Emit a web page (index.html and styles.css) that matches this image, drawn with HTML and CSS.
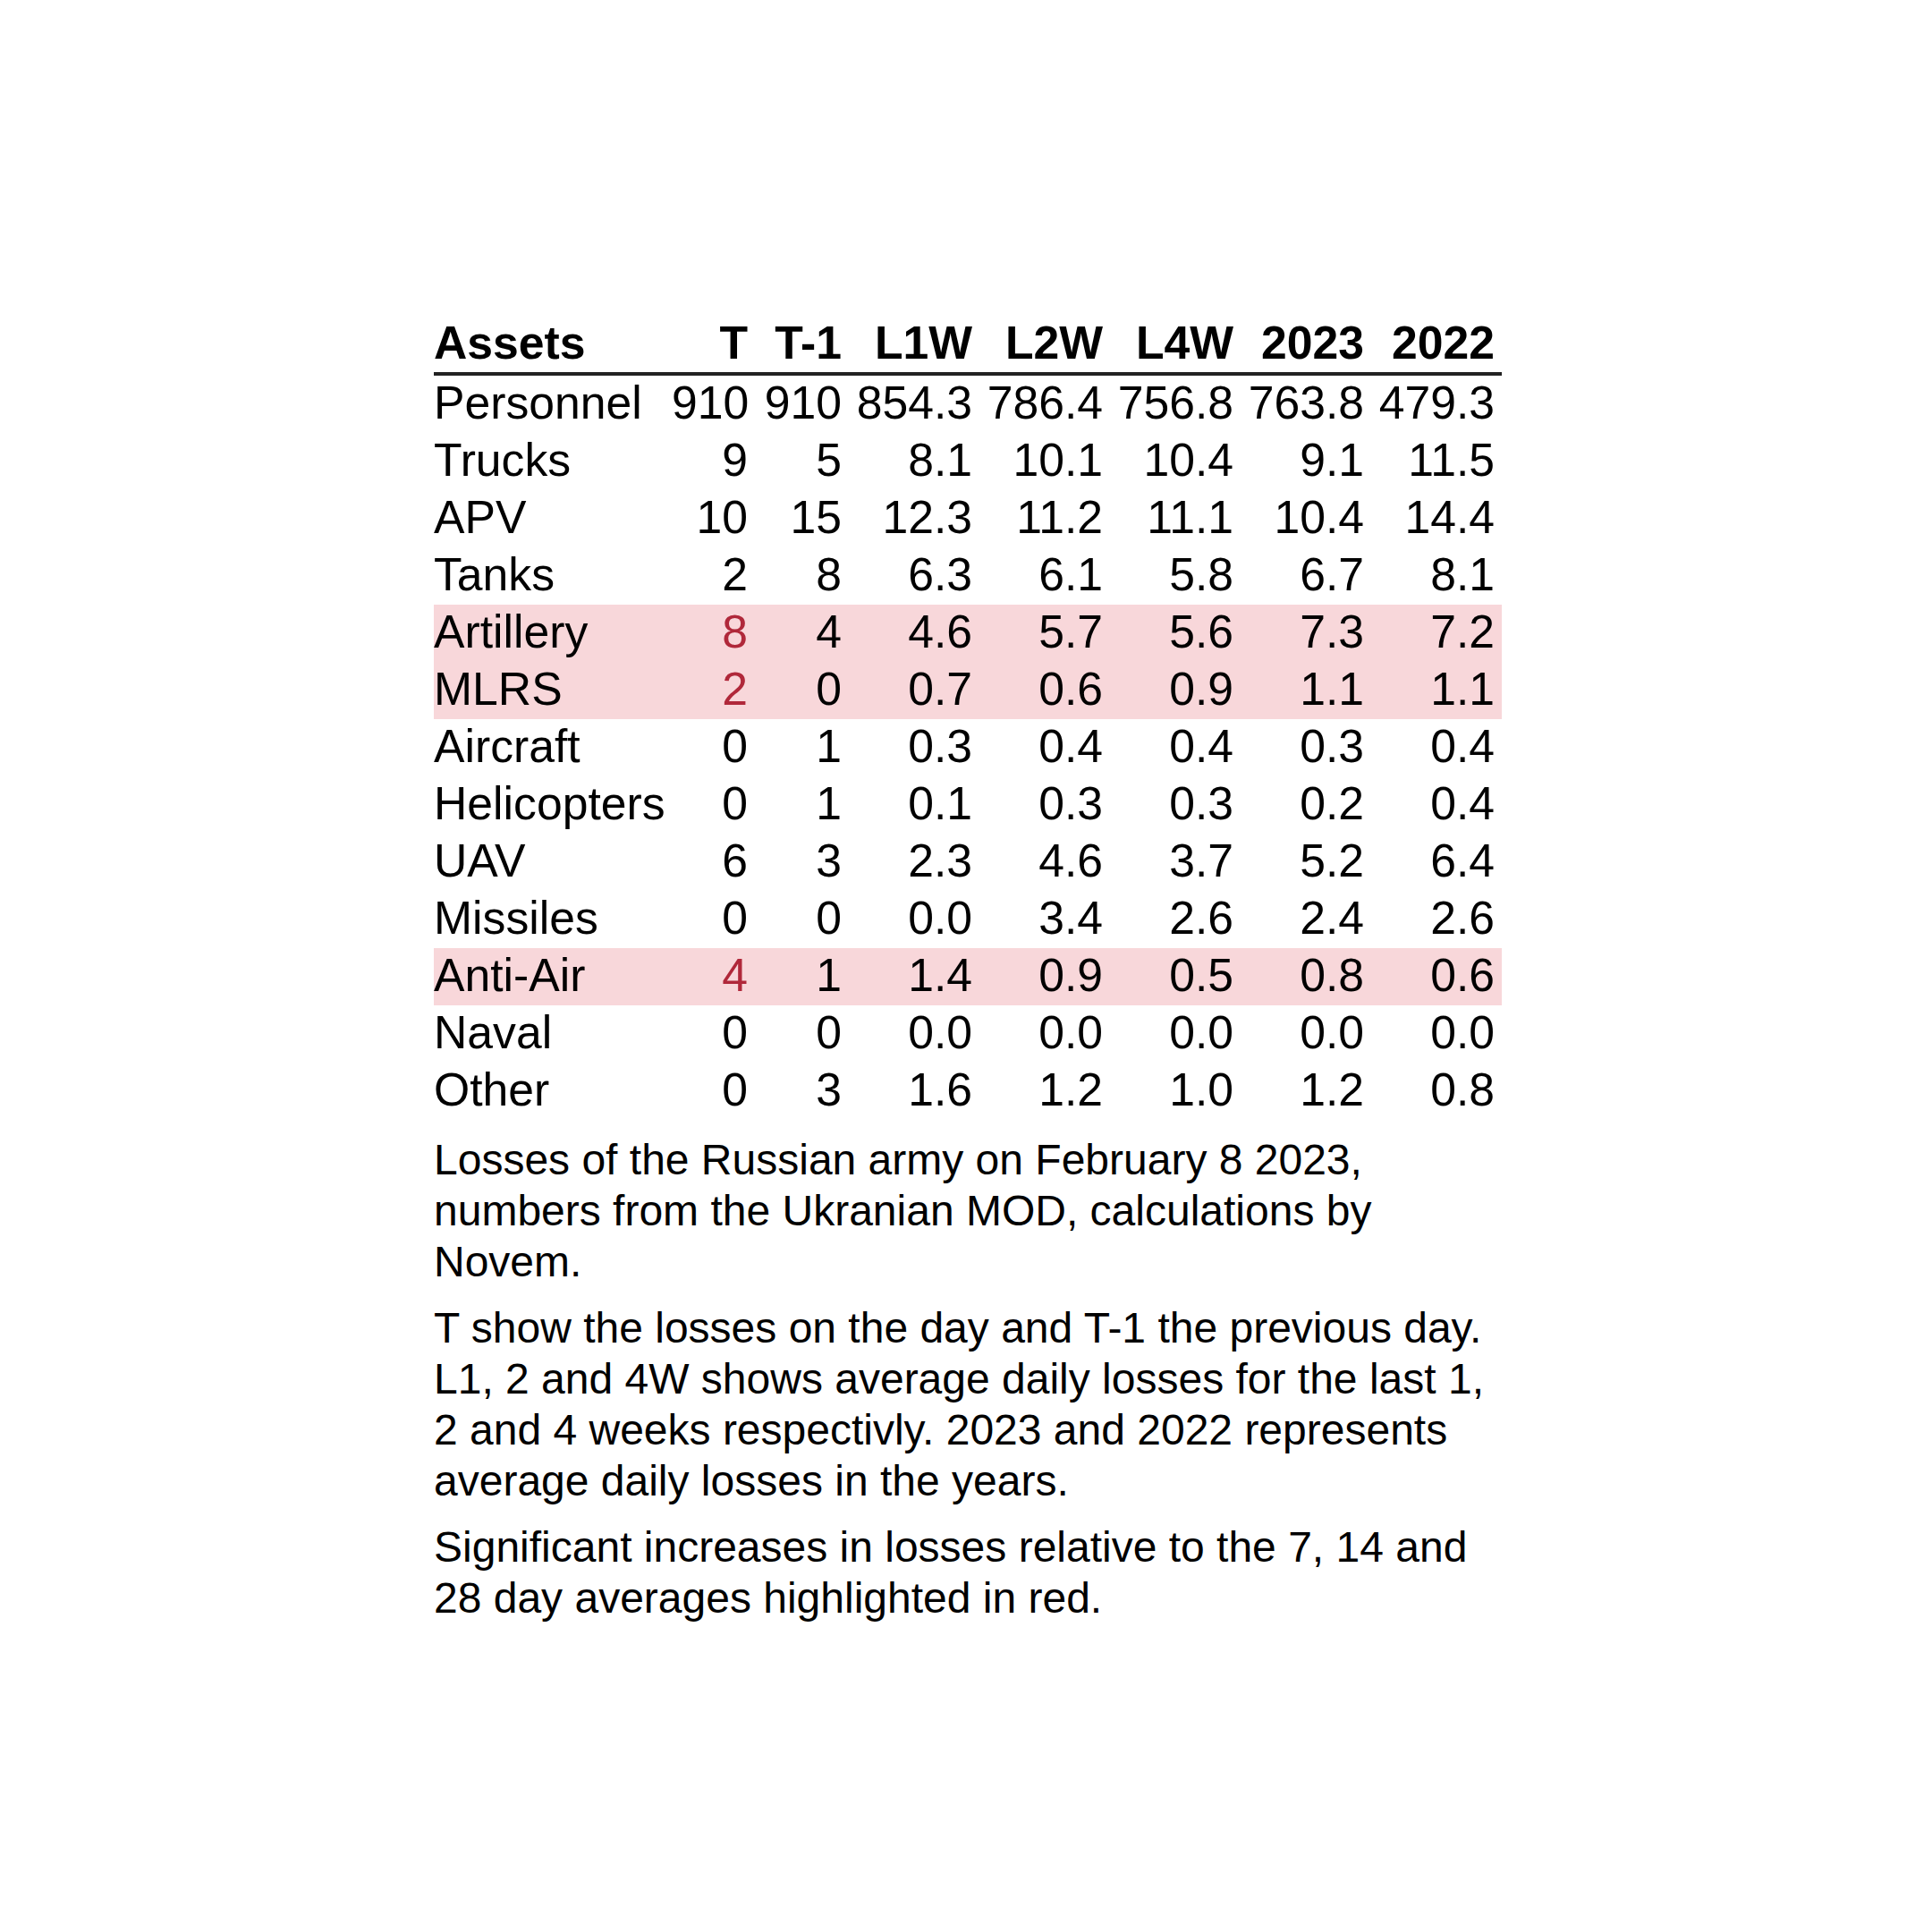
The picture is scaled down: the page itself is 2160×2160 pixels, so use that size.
FILE: index.html
```html
<!DOCTYPE html>
<html lang="en">
<head>
<meta charset="utf-8">
<title>Losses table</title>
<link rel="stylesheet" href="styles.css">
</head>
<body>
<div class="page">
  <table class="losses">
    <colgroup>
      <col class="c-name"><col class="c-t"><col class="c-t1">
      <col class="c-num"><col class="c-num"><col class="c-num"><col class="c-num"><col class="c-num">
    </colgroup>
    <thead>
      <tr>
        <th class="name">Assets</th><th>T</th><th>T-1</th><th>L1W</th><th>L2W</th><th>L4W</th><th>2023</th><th>2022</th>
      </tr>
    </thead>
    <tbody>
      <tr><td class="name">Personnel</td><td>910</td><td>910</td><td>854.3</td><td>786.4</td><td>756.8</td><td>763.8</td><td>479.3</td></tr>
      <tr><td class="name">Trucks</td><td>9</td><td>5</td><td>8.1</td><td>10.1</td><td>10.4</td><td>9.1</td><td>11.5</td></tr>
      <tr><td class="name">APV</td><td>10</td><td>15</td><td>12.3</td><td>11.2</td><td>11.1</td><td>10.4</td><td>14.4</td></tr>
      <tr><td class="name">Tanks</td><td>2</td><td>8</td><td>6.3</td><td>6.1</td><td>5.8</td><td>6.7</td><td>8.1</td></tr>
      <tr class="hl"><td class="name">Artillery</td><td class="red">8</td><td>4</td><td>4.6</td><td>5.7</td><td>5.6</td><td>7.3</td><td>7.2</td></tr>
      <tr class="hl"><td class="name">MLRS</td><td class="red">2</td><td>0</td><td>0.7</td><td>0.6</td><td>0.9</td><td>1.1</td><td>1.1</td></tr>
      <tr><td class="name">Aircraft</td><td>0</td><td>1</td><td>0.3</td><td>0.4</td><td>0.4</td><td>0.3</td><td>0.4</td></tr>
      <tr><td class="name">Helicopters</td><td>0</td><td>1</td><td>0.1</td><td>0.3</td><td>0.3</td><td>0.2</td><td>0.4</td></tr>
      <tr><td class="name">UAV</td><td>6</td><td>3</td><td>2.3</td><td>4.6</td><td>3.7</td><td>5.2</td><td>6.4</td></tr>
      <tr><td class="name">Missiles</td><td>0</td><td>0</td><td>0.0</td><td>3.4</td><td>2.6</td><td>2.4</td><td>2.6</td></tr>
      <tr class="hl"><td class="name">Anti-Air</td><td class="red">4</td><td>1</td><td>1.4</td><td>0.9</td><td>0.5</td><td>0.8</td><td>0.6</td></tr>
      <tr><td class="name">Naval</td><td>0</td><td>0</td><td>0.0</td><td>0.0</td><td>0.0</td><td>0.0</td><td>0.0</td></tr>
      <tr><td class="name">Other</td><td>0</td><td>3</td><td>1.6</td><td>1.2</td><td>1.0</td><td>1.2</td><td>0.8</td></tr>
    </tbody>
  </table>
  <div class="notes">
    <p>Losses of the Russian army on February 8 2023, numbers from the Ukranian MOD, calculations by Novem.</p>
    <p>T show the losses on the day and T-1 the previous day. L1, 2 and 4W shows average daily losses for the last 1, 2 and 4 weeks respectivly. 2023 and 2022 represents average daily losses in the years.</p>
    <p>Significant increases in losses relative to the 7, 14 and 28 day averages highlighted in red.</p>
  </div>
</div>
</body>
</html>
```

FILE: styles.css
```css
html, body {
  margin: 0;
  padding: 0;
  background: #ffffff;
}

body {
  font-family: "Liberation Sans", Arial, sans-serif;
  color: #000000;
}

.page {
  width: 1194px;
  padding: 353px 0 0 485px;
}

.losses {
  border-collapse: collapse;
  table-layout: fixed;
  width: 1194px;
  font-size: 51.7px;
}

.c-name { width: 266px; }
.c-t { width: 93px; }
.c-t1 { width: 105px; }
.c-num { width: 146px; }

.losses th {
  font-weight: bold;
  line-height: 60px;
  padding: 0 8px 3px 0;
  text-align: right;
  border-bottom: 4px solid #222222;
  white-space: nowrap;
}

.losses td {
  line-height: 60px;
  padding: 0 8px 4px 0;
  text-align: right;
  white-space: nowrap;
}

.losses .name {
  text-align: left;
  padding-right: 0;
}

.losses tr.hl td {
  background: #f8d7da;
}

.losses td.red {
  color: #b0283a;
}

.notes {
  width: 1194px;
  padding-top: 16px;
  font-size: 48px;
  line-height: 57px;
}

.notes p {
  margin: 0;
}

.notes p + p {
  margin-top: 17px;
}
```
